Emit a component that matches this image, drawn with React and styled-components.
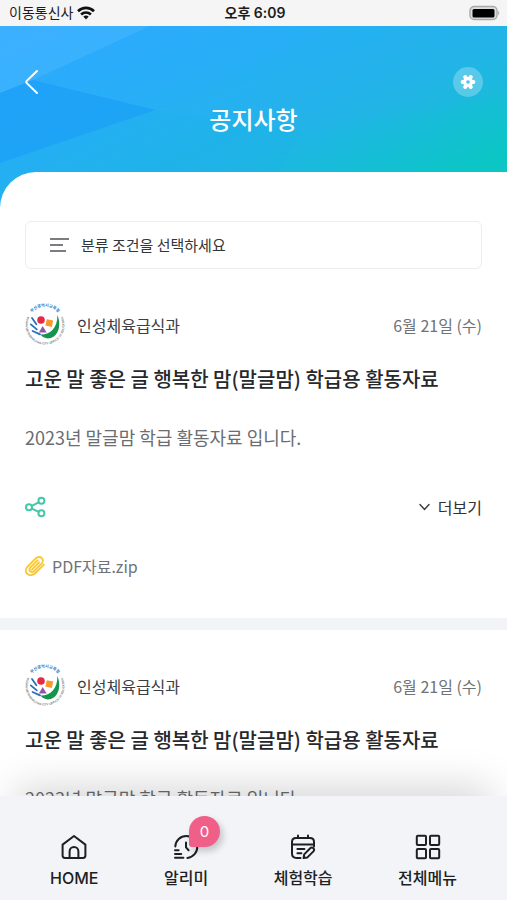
import React, { useId } from "react";
import styled, { createGlobalStyle } from "styled-components";

const GlobalStyle = createGlobalStyle`
  *, *::before, *::after { box-sizing: border-box; }
  body {
    margin: 0;
    background: #ffffff;
    color: #26282b;
    font-family: "Noto Sans CJK KR", "Noto Sans", sans-serif;
    -webkit-font-smoothing: antialiased;
  }
  button, select { font: inherit; color: inherit; }
`;

const Screen = styled.div`
  display: flex;
  flex-direction: column;
  height: 100vh;
  overflow: hidden;
`;

const StatusBar = styled.div`
  flex: none;
  display: grid;
  grid-template-columns: 1fr auto 1fr;
  align-items: center;
  padding: 0 6px 0 9px;
  height: 26px;
  background: #f5f5f5;
  color: #1c1c1c;
  font-family: Inter, "Noto Sans CJK KR", sans-serif;
  font-size: 14px;
  line-height: 24px;
`;

const Carrier = styled.span`
  display: flex;
  align-items: center;
  gap: 4px;
`;

const Clock = styled.time`
  font-weight: 600;
`;

const Battery = styled.svg`
  justify-self: end;
`;

const Hero = styled.header`
  position: relative;
  flex: none;
  padding: 40px 24px 72px;
  background: linear-gradient(155deg, #2fa8ff 0%, #28aef8 30%, #20b5e6 60%, #0cc6c6 86%, #0bc8c0 100%);
  color: #ffffff;
`;

const Facets = styled.svg`
  position: absolute;
  inset: 0;
  width: 100%;
  height: 100%;
`;

const HeroBar = styled.div`
  position: relative;
  display: flex;
  align-items: center;
  justify-content: space-between;
  height: 32px;
`;

const BackButton = styled.button`
  display: flex;
  padding: 0;
  border: 0;
  background: none;
`;

const SettingsButton = styled.button`
  display: flex;
  align-items: center;
  justify-content: center;
  width: 30px;
  height: 30px;
  padding: 0;
  border: 0;
  border-radius: 50%;
  background: rgba(255, 255, 255, 0.26);
`;

const PageTitle = styled.h1`
  position: relative;
  margin: 4px 0 0;
  font-size: 24px;
  font-weight: 500;
  line-height: 34px;
  text-align: center;
`;

const Sheet = styled.main`
  position: relative;
  flex: 1;
  min-height: 0;
  margin-top: -36px;
  padding-top: 49px;
  border-top-left-radius: 36px;
  background: #ffffff;
  overflow: hidden;
`;

const FilterField = styled.label`
  display: flex;
  align-items: center;
  gap: 12px;
  height: 48px;
  margin: 0 25px;
  padding: 0 24px;
  border: 1px solid #ebedee;
  border-radius: 6px;
`;

const FilterSelect = styled.select`
  flex: 1;
  padding: 0;
  border: 0;
  appearance: none;
  background: none;
  color: #34363a;
  font-size: 15px;
  line-height: 24px;
`;

const Notice = styled.article`
  padding: 36px 25px 40px;

  & + & {
    border-top: 12px solid #f2f4f7;
  }
`;

const NoticeHead = styled.div`
  display: flex;
  align-items: center;
  height: 40px;
`;

const Logo = styled.svg`
  flex: none;
  overflow: visible;
`;

const Author = styled.span`
  margin-left: 12px;
  color: #3c3e42;
  font-size: 16px;
  line-height: 24px;
`;

const NoticeDate = styled.time`
  margin-left: auto;
  color: #6f7276;
  font-size: 16px;
  line-height: 24px;
`;

const NoticeTitle = styled.h2`
  margin: 19px 0 30px;
  font-size: 20px;
  font-weight: 500;
  line-height: 30px;
`;

const NoticeBody = styled.p`
  margin: 0 0 45px;
  color: #6a6d71;
  font-size: 18px;
  line-height: 26px;
`;

const NoticeActions = styled.div`
  display: flex;
  align-items: center;
  justify-content: space-between;
  margin-bottom: 35px;
`;

const TextButton = styled.button`
  display: flex;
  align-items: center;
  gap: 8px;
  padding: 0;
  border: 0;
  background: none;
  color: #303236;
  font-size: 16px;
  line-height: 24px;
`;

const Attachment = styled.a`
  display: flex;
  align-items: center;
  gap: 7px;
  color: #6f7276;
  font-size: 16px;
  line-height: 24px;
  text-decoration: none;
`;

const TabBar = styled.nav`
  position: relative;
  flex: none;
  display: flex;
  justify-content: space-between;
  padding: 38px 50px 10px;
  background: #f2f4f8;
  box-shadow: 0 -24px 40px -16px rgba(0, 0, 0, 0.17);
`;

const Tab = styled.a`
  position: relative;
  display: flex;
  flex-direction: column;
  align-items: center;
  gap: 6px;
  color: #1d1f22;
  font-family: Inter, "Noto Sans CJK KR", sans-serif;
  font-size: 16px;
  font-weight: 500;
  line-height: 24px;
  text-decoration: none;
`;

const Badge = styled.span`
  position: absolute;
  top: -18px;
  left: 50%;
  margin-left: 3px;
  width: 31px;
  height: 31px;
  border-radius: 50% 50% 50% 3px;
  background: #ef5f88;
  box-shadow: 3px 4px 7px rgba(0, 0, 0, 0.2);
  color: #ffffff;
  font-size: 15px;
  font-weight: 400;
  line-height: 31px;
  text-align: center;
`;

const Stroke = ({ size = 24, width = 2, color = "currentColor", box = 24, children }) => (
  <svg
    width={size}
    height={size}
    viewBox={`0 0 ${box} ${box}`}
    fill="none"
    stroke={color}
    strokeWidth={width}
    strokeLinecap="round"
    strokeLinejoin="round"
    aria-hidden="true"
  >
    {children}
  </svg>
);

const WifiIcon = () => (
  <svg width="18" height="14" viewBox="0 0 18 14" fill="none" stroke="#111" strokeWidth="2.6" aria-hidden="true">
    <path d="M1 5.2C5.5 0.8 12.5 0.8 17 5.2" />
    <path d="M4.1 8.5C6.8 5.9 11.2 5.9 13.9 8.5" />
    <path d="M6.3 10.6C7.9 9.2 10.1 9.2 11.7 10.6L9 13.4Z" fill="#111" stroke="none" />
  </svg>
);

const EducationOfficeLogo = () => {
  const id = useId();
  return (
    <Logo width="40" height="40" viewBox="0 0 40 40" role="img" aria-label="교육청 로고">
      <defs>
        <path id={`${id}top`} d="M4.2 12A17.2 17.2 0 0 1 35.8 12" />
        <path id={`${id}ring`} d="M6.2 6.2A19.6 19.6 0 0 0 20 39.6A19.6 19.6 0 0 0 33.8 6.2" />
      </defs>
      <text fill="#2b78c2" fontSize="4" fontWeight="700">
        <textPath href={`#${id}top`} startOffset="50%" textAnchor="middle">부산광역시교육청</textPath>
      </text>
      <text fill="#77797c" fontSize="3" fontWeight="700" fontFamily="Liberation Sans, sans-serif">
        <textPath href={`#${id}ring`} startOffset="50%" textAnchor="middle">
          BUSAN METROPOLITAN CITY OFFICE OF EDUCATION
        </textPath>
      </text>
      <path d="M32.4 10C35.8 18 34.6 27.4 28.8 31.6C24 34.8 18.2 33.6 15.6 29.6C25 30 32.6 23 32.4 10Z" fill="#13944f" />
      <circle cx="16" cy="15" r="3.8" fill="#e32b45" />
      <path d="M21.8 14.2L28.2 15.6L26.8 22L20.4 20.6Z" fill="#f7982a" />
      <path d="M17.7 21L21.6 27.4H13.9Z" fill="#9255a8" />
      <g stroke="#2b6fb8" strokeWidth="1.8" strokeLinecap="round">
        <path d="M7 13L11.4 19.2" />
        <path d="M5.8 19.4L11.8 24.4" />
        <path d="M7.6 26L15 29.4" />
      </g>
    </Logo>
  );
};

const ShareIcon = () => (
  <Stroke size={22} width={2} color="#45c7ab" box={22}>
    <circle cx="4" cy="11.2" r="3" />
    <circle cx="16.4" cy="4.8" r="3" />
    <circle cx="16.4" cy="17.2" r="3" />
    <path d="M6.8 9.8L13.7 6.3M6.8 12.6L13.7 15.8" />
  </Stroke>
);

const ClipIcon = () => (
  <Stroke size={20} width={1.9} color="#f8c834" box={20}>
    <path d="M18.8 8.6L10.4 17C7.6 19.8 3.7 19.6 2 17.7C0.3 15.8 0.5 12.6 2.8 10.3L10.8 2.4C12.7 0.5 15.4 0.6 16.8 2.1C18.3 3.6 18.2 6 16.5 7.7L9 15.1C7.9 16.2 6.1 16.3 5.1 15.2C4.1 14.1 4.3 12.5 5.4 11.4L12.5 4.4" />
    <path d="M6.9 13.6L14 6.5" />
  </Stroke>
);

const icons = {
  home: (
    <Stroke size={26} box={26}>
      <path d="M1.6 10.6L13 2L24.4 10.6V21.6Q24.4 24 22 24H4Q1.6 24 1.6 21.6Z" />
      <path d="M8.6 24V17.4A4.4 4.4 0 0 1 17.4 17.4V24" />
    </Stroke>
  ),
  alarm: (
    <Stroke size={26} box={26}>
      <path d="M2.3 12.4A11 11 0 1 1 14.4 23.9" />
      <path d="M13 8.4V13.4L15.6 16.2" />
      <path d="M2 16.2H5.6M2 20H8.2M2 23.8H10.4" />
    </Stroke>
  ),
  calendar: (
    <Stroke size={26} box={26}>
      <path d="M10.5 24H6.4Q2 24 2 19.6V8Q2 4 6 4H20Q24 4 24 8V10.4H2" />
      <path d="M8 1.6V4M18 1.6V4M24 10.4V12.4M7.4 15H14.4M7.4 19.2H11.4" />
      <path d="M14.2 20.4L20.2 14.2Q21.8 12.8 23.4 14.2Q24.8 15.8 23.4 17.4L17.4 23.4L13.6 24Z" />
    </Stroke>
  ),
  menu: (
    <Stroke size={26} box={26}>
      <rect x="1.8" y="1.8" width="9.2" height="9.2" rx="1" />
      <rect x="15" y="1.8" width="9.2" height="9.2" rx="1" />
      <rect x="1.8" y="15" width="9.2" height="9.2" rx="1" />
      <rect x="15" y="15" width="9.2" height="9.2" rx="1" />
    </Stroke>
  ),
};

const notices = [1, 2].map((id) => ({
  id,
  author: "인성체육급식과",
  date: "6월 21일 (수)",
  title: "고운 말 좋은 글 행복한 맘(말글맘) 학급용 활동자료",
  body: "2023년 말글맘 학급 활동자료 입니다.",
  file: "PDF자료.zip",
}));

const tabs = [
  { icon: "home", label: "HOME" },
  { icon: "alarm", label: "알리미", count: 0 },
  { icon: "calendar", label: "체험학습" },
  { icon: "menu", label: "전체메뉴" },
];

export default function App() {
  return (
    <Screen>
      <GlobalStyle />
      <StatusBar>
        <Carrier>
          이동통신사
          <WifiIcon />
        </Carrier>
        <Clock dateTime="18:09">오후 6:09</Clock>
        <Battery width="32" height="16" viewBox="0 0 32 16" aria-label="배터리">
          <rect x="1" y="1.5" width="27" height="13" rx="4" fill="#ddd" stroke="#aaa" strokeWidth="1.4" />
          <rect x="3.5" y="4" width="22" height="8.5" rx="1.5" fill="#000" />
          <path d="M29.2 5.5Q31.4 8 29.2 10.5Z" fill="#aaa" />
        </Battery>
      </StatusBar>

      <Hero>
        <Facets viewBox="0 0 507 182" preserveAspectRatio="none" aria-hidden="true">
          <path d="M0 0H150L33 54L0 67Z" fill="#45b6ff" opacity="0.6" />
          <path d="M0 67L33 54L155 84L0 137Z" fill="#1499f5" opacity="0.5" />
          <path d="M155 84L0 137V182H260L300 106L200 92Z" fill="#14b4e4" opacity="0.18" />
          <path d="M155 84L420 0H507V70L300 106Z" fill="#35b4ee" opacity="0.14" />
        </Facets>
        <HeroBar>
          <BackButton type="button" aria-label="뒤로">
            <svg width="16" height="26" viewBox="0 0 16 26" fill="none" stroke="#fff" strokeWidth="2" strokeLinecap="round" aria-hidden="true">
              <path d="M13 2L3 11.6Q1.6 13 3 14.4L13 24" />
            </svg>
          </BackButton>
          <SettingsButton type="button" aria-label="설정">
            <svg width="16" height="16" viewBox="0 0 16 16" aria-hidden="true">
              <g stroke="#fff" strokeWidth="4" strokeLinecap="round">
                <path d="M2.6 8H13.4" />
                <path d="M5.2 3L10.8 13" />
                <path d="M10.8 3L5.2 13" />
              </g>
              <circle cx="8" cy="8" r="5" fill="#fff" />
              <circle cx="8" cy="8" r="1.8" fill="#4fc3ea" />
            </svg>
          </SettingsButton>
        </HeroBar>
        <PageTitle>공지사항</PageTitle>
      </Hero>

      <Sheet>
        <FilterField>
          <svg width="19" height="14" viewBox="0 0 19 14" stroke="#505256" strokeWidth="1.6" aria-hidden="true">
            <path d="M0 1H19M0 7H13M0 13H16" />
          </svg>
          <FilterSelect aria-label="분류 조건" defaultValue="">
            <option value="">분류 조건을 선택하세요</option>
          </FilterSelect>
        </FilterField>

        {notices.map((notice) => (
          <Notice key={notice.id}>
            <NoticeHead>
              <EducationOfficeLogo />
              <Author>{notice.author}</Author>
              <NoticeDate dateTime="2023-06-21">{notice.date}</NoticeDate>
            </NoticeHead>
            <NoticeTitle>{notice.title}</NoticeTitle>
            <NoticeBody>{notice.body}</NoticeBody>
            <NoticeActions>
              <TextButton type="button" aria-label="공유">
                <ShareIcon />
              </TextButton>
              <TextButton type="button">
                <svg width="11" height="8" viewBox="0 0 11 8" fill="none" stroke="#3a3c40" strokeWidth="1.4" strokeLinecap="round" aria-hidden="true">
                  <path d="M1 1.5L5.5 6.5L10 1.5" />
                </svg>
                더보기
              </TextButton>
            </NoticeActions>
            <Attachment href="#file">
              <ClipIcon />
              {notice.file}
            </Attachment>
          </Notice>
        ))}
      </Sheet>

      <TabBar aria-label="주 메뉴">
        {tabs.map((tab) => (
          <Tab key={tab.label} href={`#${tab.icon}`}>
            {icons[tab.icon]}
            {tab.label}
            {tab.count !== undefined && <Badge>{tab.count}</Badge>}
          </Tab>
        ))}
      </TabBar>
    </Screen>
  );
}
